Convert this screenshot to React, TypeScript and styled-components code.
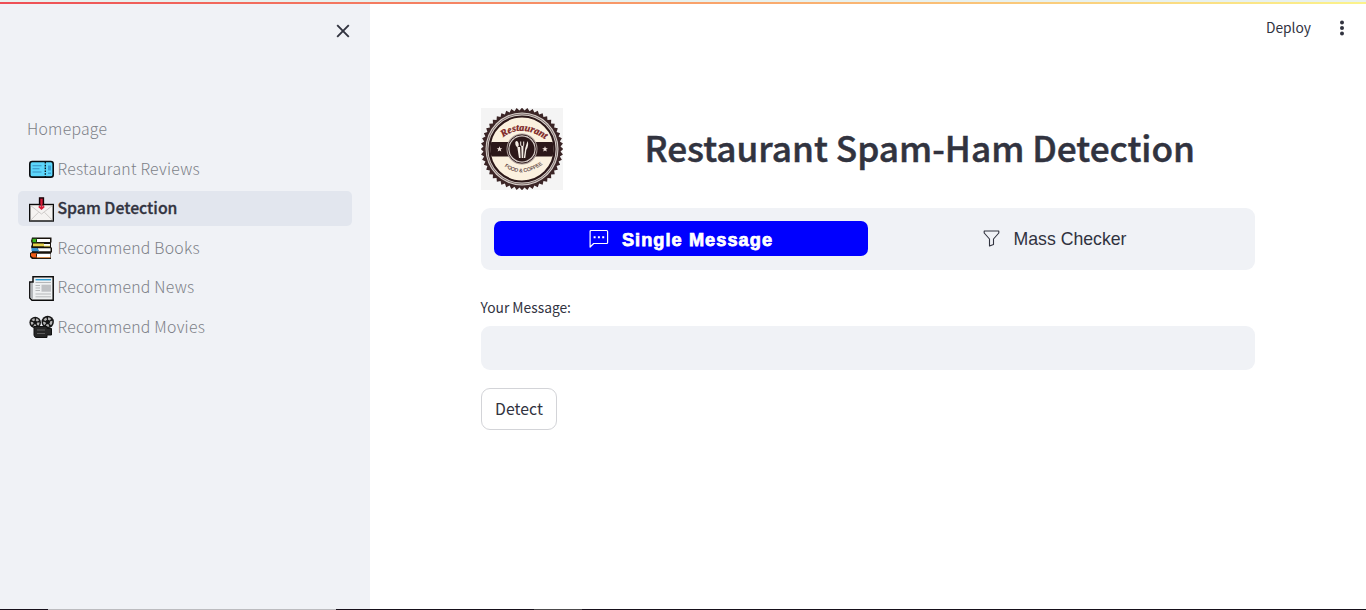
import React from "react";
import styled, { createGlobalStyle } from "styled-components";

const Global = createGlobalStyle`
  * { box-sizing: border-box; }
  body { margin: 0; background: #fff; color: #31333f; font-family: "Noto Sans CJK SC", "Noto Sans", sans-serif; overflow: hidden; }
  button, input { font: inherit; color: inherit; }
`;

const Page = styled.div`
  height: 610px;
  display: flex;
  flex-direction: column;
`;
const Decoration = styled.div`
  height: 4px;
  flex: none;
  border-top: 2px solid #e8f1ee;
  background: linear-gradient(90deg, #ee4e55, #f9a06a 50%, #fbf38c) padding-box;
`;
const Body = styled.div`
  flex: 1;
  display: flex;
`;
const BottomEdge = styled.div`
  height: 1px;
  flex: none;
  background: linear-gradient(90deg, #16101a 48px, #bcbcbf 48px 336px, #16101a 336px 534px, #4c4a4c 534px 582px, #16101a 582px);
`;

const Sidebar = styled.aside`
  width: 370px;
  background: #f0f2f6;
  padding: 0 18px;
`;
const SidebarTop = styled.div`
  height: 108px;
  padding: 20px 2px 0 0;
  display: flex;
  justify-content: flex-end;
  align-items: flex-start;
`;
const IconButton = styled.button`
  border: 0;
  background: none;
  padding: 0;
  display: flex;
`;
const Nav = styled.nav`
  display: flex;
  flex-direction: column;
  gap: 4.6px;
`;
const NavItem = styled.a<{ $active?: boolean }>`
  height: 35px;
  border-radius: 5px;
  padding: 0 9px;
  display: flex;
  align-items: center;
  gap: 1.5px;
  font-size: 15.8px;
  line-height: 33px;
  white-space: nowrap;
  background: ${(p) => (p.$active ? "#e2e6ee" : "transparent")};
  color: ${(p) => (p.$active ? "#31333f" : "#7c7f87")};
  font-weight: ${(p) => (p.$active ? 500 : 300)};
  letter-spacing: ${(p) => (p.$active ? "0" : "0.25px")};
  -webkit-text-stroke: ${(p) => (p.$active ? "0.3px #31333f" : "0")};
  span { padding-bottom: 2px; }
  svg { margin: 1px 2px 0; flex: none; }
`;

const Main = styled.main`
  flex: 1;
  display: flex;
  flex-direction: column;
`;
const Toolbar = styled.header`
  height: 104px;
  padding: 11px 18px 0 0;
  display: flex;
  justify-content: flex-end;
  align-items: flex-start;
  gap: 25px;
  font-size: 13.8px;
  line-height: 24px;
`;
const MenuButton = styled(IconButton)`
  padding-top: 5px;
`;
const Content = styled.div`
  width: 774px;
  margin-left: 111px;
  display: flex;
  flex-direction: column;
`;
const Heading = styled.div`
  display: flex;
  align-items: center;
  height: 82px;
  margin-bottom: 18px;
`;
const Title = styled.h1`
  margin: 0 0 0 81.5px;
  padding-bottom: 4px;
  font-size: 35.2px;
  line-height: 44px;
  font-weight: 500;
  -webkit-text-stroke: 0.5px #31333f;
  white-space: nowrap;
`;
const Tabs = styled.div`
  height: 62px;
  border-radius: 9px;
  background: #f0f2f6;
  padding: 13px;
  display: flex;
`;
const Tab = styled.button<{ $active?: boolean }>`
  flex: 1;
  height: 35px;
  border: 0;
  border-radius: 7px;
  padding: 0;
  display: flex;
  align-items: center;
  justify-content: center;
  gap: 13px;
  font-family: "Liberation Sans", Arial, sans-serif;
  font-size: ${(p) => (p.$active ? "18.2px" : "17.7px")};
  font-weight: ${(p) => (p.$active ? 700 : 400)};
  -webkit-text-stroke: ${(p) => (p.$active ? "0.75px #fff" : "0")};
  letter-spacing: ${(p) => (p.$active ? "1.05px" : "0")};
  background: ${(p) => (p.$active ? "#0000ff" : "transparent")};
  color: ${(p) => (p.$active ? "#fff" : "#31333f")};
  span { padding-top: ${(p) => (p.$active ? "3px" : "2px")}; }
`;
const Label = styled.label`
  margin: 25px 0 0 -0.5px;
  font-size: 13.8px;
  line-height: 24px;
`;
const TextInput = styled.input`
  margin-top: 7px;
  height: 44px;
  border: 0;
  border-radius: 9px;
  background: #f0f2f6;
  padding: 0 13px;
`;
const Action = styled.button`
  margin-top: 18px;
  width: 76px;
  height: 42px;
  border: 1px solid #d3d4d8;
  border-radius: 9px;
  background: #fff;
  padding: 0 0 2px;
  font-size: 15.8px;
`;

const Ticket = () => (
  <svg width="25" height="25" viewBox="0 0 25 25">
    <rect x=".8" y="4.500" width="23.400" height="15.600" rx="2.400" fill="#5cd6fb" stroke="#0a0d10" strokeWidth="1.600" />
    <path d="M3.500 8.700h9M3.500 11.800h7M3.500 15h9" stroke="#3a8fc0" strokeWidth="1.100" />
    <path d="M19 8.500h3v5h-3zM19 15.500h3V17h-3z" fill="#3a9fd4" />
    <path d="M16.300 5v15" stroke="#0a0d10" strokeWidth="1.300" strokeDasharray="1.600 1.200" />
  </svg>
);
const Envelope = () => (
  <svg width="25" height="25" viewBox="0 0 25 25">
    <rect x=".7" y="7.500" width="23.600" height="16.500" fill="#f5f3f1" stroke="#0a0a0a" strokeWidth="1.400" />
    <path d="M1.500 8.500l11 8.500 11-8.500M1.500 23.300l8-8M23.500 23.300l-8-8" fill="none" stroke="#c9c6c4" strokeWidth=".9" />
    <path d="M10.500.8h4v7h-4z" fill="#8c1226" stroke="#160508" strokeWidth="1.300" />
    <path d="M12.500 2v9M9.800 9.300l2.700 2.600 2.700-2.600" fill="none" stroke="#d51d38" strokeWidth="1.700" />
  </svg>
);
const Books = () => (
  <svg width="25" height="25" viewBox="0 0 25 25">
    <path d="M3 1.500h19.500v5H22v5h1v5h-1v6.500H3l-2-2v-4l2-1v-3l-1-2 1-3-1-3z" fill="#17120c" />
    <path d="M8 3h13v3H8zM9 8h12v2H9zM9 12.300h12.500v3H9zM8 17.700h13.500v3.800H8z" fill="#fff" />
    <path d="M3.500 2.700H8q-2 2 0 3.600H3.500z" fill="#37b51c" />
    <path d="M4 7.500h11v2.800H4z" fill="#e5d24b" />
    <path d="M2.500 12h6q1 2 2 3.300h-8z" fill="#3a93d1" />
    <path d="M2 17.300h6q-2 2 0 4.200H4l-2-1.400z" fill="#ef5b17" />
    <path d="M15 10.200h6" stroke="#e5d24b" strokeWidth=".9" />
    <path d="M8 21.600h13.500" stroke="#ef8a3a" strokeWidth=".8" />
  </svg>
);
const News = () => (
  <svg width="25" height="25" viewBox="0 0 25 25">
    <path d="M4 .8h20.200v23.400H3L.8 22V6H4z" fill="#eef0f1" stroke="#0d0d0d" strokeWidth="1.500" />
    <path d="M1.600 7H4v16l-2.400-1.200z" fill="#b4b7ba" />
    <path d="M6.500 3.700H22" stroke="#299bd1" strokeWidth="1.400" />
    <path d="M6.500 6.500H22M6.500 9.500H11M6.500 12H11M6.500 14.500H11M6.500 18H22M6.500 20.800H22" stroke="#b5b7b9" />
    <path d="M12.500 8.700H22v7h-9.500z" fill="#bfc1c4" />
  </svg>
);
const Camera = () => (
  <svg width="25" height="25" viewBox="0 0 25 25">
    <circle cx="6.200" cy="7.500" r="5.800" fill="#151515" />
    <circle cx="18.700" cy="7" r="6.200" fill="#151515" />
    <circle cx="6.200" cy="7.500" r="3.200" fill="none" stroke="#b4b4b4" strokeWidth="2.400" strokeDasharray="2.500 1.400" />
    <circle cx="18.700" cy="7" r="3.500" fill="none" stroke="#b4b4b4" strokeWidth="2.400" strokeDasharray="2.700 1.400" />
    <path d="M5 11.500h13v2h4.500v6.500H18v2.500H7q-2-.5-2-2.500z" fill="#262626" stroke="#111" />
    <path d="M8 15h8M8 18.500h8" stroke="#5d5d5d" />
  </svg>
);

const teeth = Array.from({ length: 96 }, (_, i) => {
  const r = i % 2 ? 38.6 : 41.3;
  const a = (i * Math.PI) / 48;
  return `${(41 + r * Math.cos(a)).toFixed(2)},${(41 + r * Math.sin(a)).toFixed(2)}`;
}).join(" ");

const Logo = () => (
  <svg width="82" height="82" viewBox="0 0 82 82">
    <defs>
      <path id="arcTop" d="M22 29.500Q41 14 68 34" />
      <path id="arcBottom" d="M23.500 58.500Q41 71 62 56" />
      <clipPath id="face"><circle cx="41" cy="41" r="31.500" /></clipPath>
    </defs>
    <rect width="82" height="82" fill="#f4f4f4" />
    <polygon points={teeth} fill="#3b2526" />
    <circle cx="41" cy="41" r="36.500" fill="#d8d0cb" />
    <circle cx="41" cy="41" r="35" fill="none" stroke="#7b6a68" strokeWidth="1" />
    <circle cx="41" cy="41" r="32.500" fill="#fbf1df" stroke="#2c1819" strokeWidth="2.200" />
    <rect x="8" y="34" width="66" height="14.500" fill="#2c1819" clipPath="url(#face)" />
    <circle cx="41" cy="41" r="15.500" fill="#a89b97" />
    <circle cx="41" cy="41" r="14.200" fill="#d8d0cb" stroke="#3b2526" strokeWidth="1" />
    <circle cx="41" cy="41" r="12.500" fill="#2c1819" />
    <path d="M36.300 39l1.700 11h1.600l-.5-11zM40.300 38l.4 12h1.500l.3-12zM46.500 33q1.800 4-1.200 9l-1 8h-1.500l1.500-10z" fill="#f4ece4" />
    <ellipse cx="36" cy="36" rx="1.700" ry="3" fill="#f4ece4" transform="rotate(-12 36 36)" />
    <path d="M39.700 33.500v4q1.500 2 3 0v-4" fill="none" stroke="#f4ece4" />
    <path id="star" d="M18.500 38.300l.8 1.900 2 .1-1.600 1.300.6 2-1.800-1.100-1.800 1.100.6-2-1.600-1.300 2-.1z" fill="#f4e6df" />
    <use href="#star" x="45.500" />
    <text fontFamily="Liberation Serif, serif" fontStyle="italic" fontWeight="700" fontSize="10" fill="#7c2425" stroke="#7c2425" strokeWidth=".3">
      <textPath href="#arcTop">Restaurant</textPath>
    </text>
    <text fontFamily="Liberation Sans, sans-serif" fontSize="5" fill="#59403e" stroke="#59403e" strokeWidth=".15">
      <textPath href="#arcBottom">FOOD &amp; COFFEE</textPath>
    </text>
  </svg>
);

const items = [
  { label: "Homepage" },
  { label: "Restaurant Reviews", icon: <Ticket /> },
  { label: "Spam Detection", icon: <Envelope />, active: true },
  { label: "Recommend Books", icon: <Books /> },
  { label: "Recommend News", icon: <News /> },
  { label: "Recommend Movies", icon: <Camera /> },
];

export default function App() {
  return (
    <Page>
      <Global />
      <Decoration />
      <Body>
        <Sidebar>
          <SidebarTop>
            <IconButton aria-label="Close sidebar">
              <svg width="14" height="14" viewBox="0 0 14 14">
                <path d="M1.200 1.200l11.600 11.600M12.800 1.200L1.200 12.800" stroke="#31333f" strokeWidth="1.900" />
              </svg>
            </IconButton>
          </SidebarTop>
          <Nav>
            {items.map((it) => (
              <NavItem key={it.label} $active={it.active}>
                {it.icon}
                <span>{it.label}</span>
              </NavItem>
            ))}
          </Nav>
        </Sidebar>
        <Main>
          <Toolbar>
            <span>Deploy</span>
            <MenuButton aria-label="Menu">
              <svg width="12" height="16" viewBox="0 0 12 16" fill="#31333f">
                <circle cx="6" cy="2.500" r="2" />
                <circle cx="6" cy="8" r="2" />
                <circle cx="6" cy="13.500" r="2" />
              </svg>
            </MenuButton>
          </Toolbar>
          <Content>
            <Heading>
              <Logo />
              <Title>Restaurant Spam-Ham Detection</Title>
            </Heading>
            <Tabs>
              <Tab $active>
                <svg width="20" height="20" viewBox="0 0 20 20" fill="none" stroke="#fff" strokeWidth="1.200">
                  <path d="M1.100 18V2.500q0-1 1-1h15.500q1 0 1 1v11q0 1-1 1H4.700z" strokeLinejoin="round" />
                  <path d="M4.600 7.200h2v2h-2zM8.900 7.200h2v2h-2zM13.200 7.200h2v2h-2z" fill="#fff" stroke="none" />
                </svg>
                <span>Single Message</span>
              </Tab>
              <Tab>
                <svg width="17" height="17" viewBox="0 0 17 17" fill="none" stroke="#31333f" strokeWidth="1.100" strokeLinejoin="round">
                  <path d="M1.200 1h14.600v2L10.500 9v5.400L6.500 16V9L1.200 3z" />
                </svg>
                <span>Mass Checker</span>
              </Tab>
            </Tabs>
            <Label htmlFor="message">Your Message:</Label>
            <TextInput id="message" />
            <div>
              <Action>Detect</Action>
            </div>
          </Content>
        </Main>
      </Body>
      <BottomEdge />
    </Page>
  );
}
